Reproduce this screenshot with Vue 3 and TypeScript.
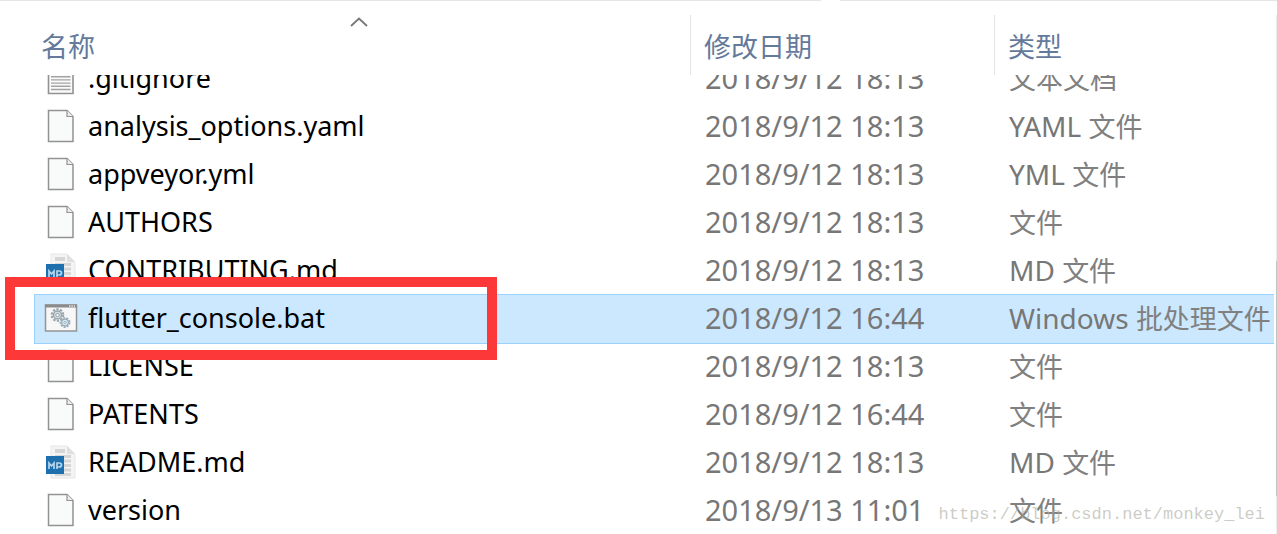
<script setup lang="ts">
type IconKind = 'text' | 'blank' | 'markdown' | 'batch'

interface FileRow {
  name: string
  date: string
  prefix?: string
  type: string
  icon: IconKind
  clipped?: boolean
  selected?: boolean
}

const files: FileRow[] = [
  { name: '.gitignore', date: '2018/9/12 18:13', type: '文本文档', icon: 'text', clipped: true },
  { name: 'analysis_options.yaml', date: '2018/9/12 18:13', prefix: 'YAML ', type: '文件', icon: 'blank' },
  { name: 'appveyor.yml', date: '2018/9/12 18:13', prefix: 'YML ', type: '文件', icon: 'blank' },
  { name: 'AUTHORS', date: '2018/9/12 18:13', type: '文件', icon: 'blank' },
  { name: 'CONTRIBUTING.md', date: '2018/9/12 18:13', prefix: 'MD ', type: '文件', icon: 'markdown' },
  { name: 'flutter_console.bat', date: '2018/9/12 16:44', prefix: 'Windows ', type: '批处理文件', icon: 'batch', selected: true },
  { name: 'LICENSE', date: '2018/9/12 18:13', type: '文件', icon: 'blank' },
  { name: 'PATENTS', date: '2018/9/12 16:44', type: '文件', icon: 'blank' },
  { name: 'README.md', date: '2018/9/12 18:13', prefix: 'MD ', type: '文件', icon: 'markdown' },
  { name: 'version', date: '2018/9/13 11:01', type: '文件', icon: 'blank' },
]
</script>

<template>
  <main class="explorer">
    <div class="top-line"><span></span><span></span></div>
    <table class="files">
      <colgroup>
        <col />
        <col class="col-date" />
        <col class="col-type" />
      </colgroup>
      <thead>
        <tr>
          <th scope="col" aria-sort="ascending">
            <div class="head first">
              <span>名称</span>
              <svg class="sort" width="18" height="10" viewBox="0 0 18 10" aria-hidden="true">
                <path d="M1 9 L9 1.5 L17 9" fill="none" stroke="#777" stroke-width="1.8" />
              </svg>
            </div>
          </th>
          <th scope="col"><div class="head">修改日期</div></th>
          <th scope="col"><div class="head">类型</div></th>
        </tr>
      </thead>
      <tbody>
        <tr v-for="file in files" :key="file.name" :class="{ clipped: file.clipped, selected: file.selected }">
          <td class="name">
            <div class="clip">
              <div class="cell">
                <svg class="icon" width="34" height="34" viewBox="0 0 34 34" aria-hidden="true">
                  <template v-if="file.icon === 'blank'">
                    <path d="M4.500 1.500 H23 L29 7.500 V32.500 H4.500 Z" fill="#f9fbfb" stroke="#929292" stroke-width="1.5" />
                    <path d="M23 1.500 V7.500 H29" fill="#eee" stroke="#929292" stroke-width="1.2" />
                  </template>
                  <template v-else-if="file.icon === 'text'">
                    <path d="M4.500 1.500 H23 L29 7.500 V32.500 H4.500 Z" fill="#fafafa" stroke="#929292" stroke-width="1.6" />
                    <path d="M7 9H26.500M7 12.500H26.500M7 15.700H26.500M7 18.900H26.500M7 22.100H26.500M7 25.300H26.500M7 28.500H26.500" stroke="#a3a3a3" stroke-width="1.4" />
                  </template>
                  <template v-else-if="file.icon === 'markdown'">
                    <path d="M7 1 H23 L31 9 V33 H7 Z" fill="#f4f4f4" stroke="#e6e6e6" />
                    <path d="M23 1 V9 H31 Z" fill="#e0e0e0" />
                    <path d="M11 4H21V8H11ZM11 10H27V13H11ZM11 14.500H27V17.500H11ZM11 19H27V22H11ZM11 23.500H27V26.500H11ZM11 28H27V31H11Z" fill="#d6d6d6" />
                    <rect x="2" y="11" width="18" height="18" fill="#1e6fae" />
                    <path d="M5 24V18L7.500 21L10 18V24M13 24V18H15Q17.500 18 17.500 20T15 22H13" fill="none" stroke="#b4d6ee" stroke-width="1.7" />
                  </template>
                  <template v-else>
                    <rect x="1.500" y="4" width="31" height="26" fill="#f7f7f7" stroke="#949494" stroke-width="1.5" />
                    <path d="M1 5H33" stroke="#8b8b8b" stroke-width="3" />
                    <path d="M25 5H31" stroke="#e6e6e6" stroke-width="1.3" stroke-dasharray="1.4 1" />
                    <circle cx="13.500" cy="14" r="5.800" fill="none" stroke="#98a3aa" stroke-width="2" stroke-dasharray="2.300 1.340" />
                    <circle cx="13.500" cy="14" r="4" fill="#d9e2e8" stroke="#98a3aa" stroke-width="1.5" />
                    <circle cx="13.500" cy="14" r="1.700" fill="#fff" stroke="#8f9aa2" />
                    <circle cx="21" cy="21.500" r="4.600" fill="none" stroke="#96abb7" stroke-width="1.7" stroke-dasharray="2 1.210" />
                    <circle cx="21" cy="21.500" r="3.300" fill="#d6ebf5" stroke="#96abb7" stroke-width="1.2" />
                    <circle cx="21" cy="21.500" r="1.100" fill="#fff" stroke="#8aa0ad" stroke-width=".8" />
                  </template>
                </svg>
                <span>{{ file.name }}</span>
              </div>
            </div>
            <div v-if="file.selected" class="marker"></div>
          </td>
          <td><div class="clip"><div class="cell date">{{ file.date }}</div></div></td>
          <td>
            <div class="clip">
              <div class="cell">{{ file.prefix }}<span class="han">{{ file.type }}</span></div>
            </div>
          </td>
        </tr>
      </tbody>
    </table>
    <div class="rail"><div class="thumb"></div></div>
    <div class="watermark">https://blog.csdn.net/monkey_lei</div>
  </main>
</template>

<style>
body {
  margin: 0;
  background: #fff;
  overflow: hidden;
}
</style>

<style scoped>
.explorer {
  position: relative;
  box-sizing: border-box;
  padding: 0 3px 0 34px;
  overflow: hidden;
  font-family: "Noto Sans", "Noto Sans CJK SC", sans-serif;
  font-size: 28px;
  color: #777;
}

.top-line {
  display: flex;
  gap: 19px;
  height: 1px;
  margin: 0 -3px 0 -34px;
}

.top-line span {
  flex: 437;
  background: #e5e5e5;
}

.top-line span:first-child {
  flex: 821;
}

.files {
  width: 100%;
  table-layout: fixed;
  border-collapse: collapse;
}

.col-date {
  width: 304px;
}

.col-type {
  width: 280px;
}

th,
td {
  padding: 0;
  text-align: left;
  font-weight: 400;
}

.head {
  position: relative;
  box-sizing: border-box;
  height: 60px;
  margin-top: 14px;
  padding: 11px 0 0 13px;
  border-left: 1px solid #e3e3e3;
  font-family: "Noto Sans CJK SC", sans-serif;
  font-size: 27px;
  line-height: 40px;
  color: #647a9b;
}

.head.first {
  border-left: 0;
  padding-left: 7px;
}

.sort {
  position: absolute;
  top: 2px;
  left: 316px;
}

.clip {
  display: flex;
  align-items: flex-end;
  height: 48px;
}

.clipped .clip {
  height: 28px;
  overflow: hidden;
}

.cell {
  display: flex;
  flex: none;
  box-sizing: border-box;
  align-items: center;
  height: 48px;
  padding: 0 0 2px 15px;
  line-height: 46px;
  white-space: pre;
}

.date {
  font-size: 29px;
}

.name {
  position: relative;
  font-size: 27px;
  color: #000;
}

.name .cell {
  gap: 10px;
  padding-left: 10px;
}

.icon {
  flex: none;
}

.han {
  font-family: "Noto Sans CJK SC", sans-serif;
  font-size: 27px;
  color: #808080;
}

.selected .clip {
  box-sizing: border-box;
  height: 50px;
  margin: -1px 0;
  border: solid #99d1ff;
  border-width: 1px 0;
  background: #cce8ff;
}

.selected .name .clip {
  box-shadow: inset 1px 0 #99d1ff;
}

.marker {
  position: absolute;
  z-index: 1;
  top: -18px;
  left: -29px;
  box-sizing: border-box;
  width: 492px;
  height: 83px;
  border: 10px solid #fc3838;
}

.rail {
  position: absolute;
  top: 15px;
  right: 0;
  bottom: 0;
  width: 1px;
  background: #ececec;
}

.thumb {
  height: 235px;
  margin-top: 246px;
  background: #c4c4c4;
}

.watermark {
  position: absolute;
  right: 12px;
  bottom: 8px;
  font-family: "Liberation Mono", monospace;
  font-size: 17px;
  line-height: 24px;
  color: rgba(170, 170, 160, 0.6);
}
</style>
